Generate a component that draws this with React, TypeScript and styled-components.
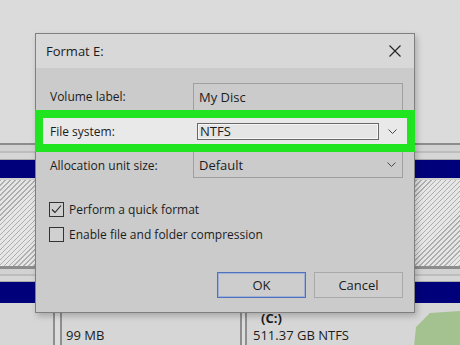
import styled, { createGlobalStyle } from 'styled-components';

const GlobalStyle = createGlobalStyle`
  html, body {
    margin: 0;
    padding: 0;
  }
  body {
    font-family: 'Open Sans', 'Noto Sans', sans-serif;
    color: #1c1c1c;
  }
`;

const Screen = styled.div`
  position: relative;
  width: 460px;
  height: 345px;
  overflow: hidden;
  background: #dadada;
  display: flex;
  flex-direction: column;
`;

const TopArea = styled.div`
  flex: none;
  height: 143px;
  background: #dbdbdb;
`;

const Divider = styled.div<{ $h: number }>`
  flex: none;
  height: ${(p) => p.$h}px;
  box-sizing: border-box;
  border-top: 2px solid #8c8c8c;
  border-bottom: 1px solid #a9a9a9;
  background: linear-gradient(#d2d2d2 0 45%, #bdbdbd 45% 55%, #d6d6d6 55%);
`;

const DiskBar = styled.div<{ $h: number }>`
  flex: none;
  height: ${(p) => p.$h}px;
  background: #00007b;
`;

const Hatch = styled.div`
  flex: none;
  height: 89px;
  box-sizing: border-box;
  border-top: 2px solid #cfcfcf;
  border-bottom: 1px solid #8e8e8e;
  background: repeating-linear-gradient(
    135deg,
    #aeaeae 0 1px,
    #e6e6e6 1px 3.5px
  );
`;

const Lower = styled.div`
  flex: 1;
  min-height: 0;
  display: grid;
  grid-template-columns: 53px 9px 178px 7px 1fr;
  grid-template-rows: 42px;
  background: #d6d6d6;
`;

const Rule = styled.div`
  border-left: 2px solid #8e8e8e;
  border-right: 2px solid #8e8e8e;
  background: #dcdcdc;
`;

const Partition = styled.div<{ $pad: number; $top: number }>`
  padding: ${(p) => p.$top}px 0 0 ${(p) => p.$pad}px;
  font-size: 13px;
  line-height: 17px;
  position: relative;
  white-space: nowrap;
`;

const DriveName = styled.div`
  font-weight: 700;
  padding-left: 8px;
`;

const Hill = styled.svg`
  position: absolute;
  right: 0;
  top: 8px;
`;

const Dialog = styled.div`
  position: absolute;
  left: 35px;
  top: 33px;
  width: 380px;
  height: 280px;
  box-sizing: border-box;
  border: 1px solid #7f7f7f;
  background: #cbcbcb;
  box-shadow: 2px 3px 6px rgba(0, 0, 0, 0.22);
  display: flex;
  flex-direction: column;
  font-size: 12px;
`;

const TitleBar = styled.div`
  height: 34px;
  flex: none;
  background: #d8d8d8;
  display: flex;
  align-items: center;
  justify-content: space-between;
  padding: 0 13px 0 10px;
  font-size: 13px;
`;

const Body = styled.div`
  padding-top: 15px;
  display: flex;
  flex-direction: column;
  flex: 1;
`;

const Row = styled.div<{ $highlight?: boolean; $h: number }>`
  display: grid;
  grid-template-columns: 143px 210px;
  align-items: stretch;
  box-sizing: border-box;
  height: ${(p) => p.$h}px;
  padding-left: ${(p) => (p.$highlight ? 7 : 14)}px;
  ${(p) =>
    p.$highlight &&
    `
    margin: 0 -1px;
    border: 8px solid #1fe41f;
    background: #e9e9e9;
  `}
`;

const Label = styled.div`
  display: flex;
  align-items: center;
`;

const Field = styled.div<{ $edge?: 'top' | 'bottom' }>`
  display: flex;
  align-items: center;
  justify-content: space-between;
  padding: 0 6px 0 5px;
  font-size: 13px;
  border-left: ${(p) => (p.$edge ? '1px solid #a0a0a0' : 'none')};
  border-right: ${(p) => (p.$edge ? '1px solid #a0a0a0' : 'none')};
  border-top: ${(p) => (p.$edge === 'top' ? '1px solid #a0a0a0' : 'none')};
  border-bottom: ${(p) => (p.$edge === 'bottom' ? '1px solid #a0a0a0' : 'none')};
`;

const Combo = styled.div`
  width: 182px;
  height: 17px;
  box-sizing: border-box;
  margin-left: -1px;
  border: 1px solid #686868;
  box-shadow: inset 0 0 0 1px #f6f6f6;
  background: #e5e5e5;
  display: flex;
  align-items: center;
  padding-left: 2px;
`;

const Options = styled.div`
  margin-top: 24px;
  padding-left: 13px;
  display: flex;
  flex-direction: column;
  gap: 10px;
`;

const CheckRow = styled.label`
  display: flex;
  align-items: center;
  gap: 5px;
  height: 15px;
`;

const Box = styled.span`
  width: 15px;
  height: 15px;
  box-sizing: border-box;
  border: 1px solid #333;
  background: #d0d0d0;
  display: flex;
  align-items: center;
  justify-content: center;
`;

const Buttons = styled.div`
  margin-top: auto;
  padding: 0 11px 14px 0;
  display: flex;
  justify-content: flex-end;
  gap: 8px;
`;

const Button = styled.div<{ $default?: boolean }>`
  width: 89px;
  height: 26px;
  box-sizing: border-box;
  border: 1px solid ${(p) => (p.$default ? '#4f72bf' : '#a9a9a9')};
  box-shadow: ${(p) => (p.$default ? 'inset 0 0 0 1px #9fb0d6' : 'none')};
  background: #cdcdcd;
  display: flex;
  align-items: center;
  justify-content: center;
  font-size: 13px;
`;

const Chevron = () => (
  <svg width="9" height="5" viewBox="0 0 9 5">
    <polyline points="0.5,0.5 4.5,4.5 8.5,0.5" fill="none" stroke="#4a4a4a" strokeWidth="1" />
  </svg>
);

export default function App() {
  return (
    <>
      <GlobalStyle />
      <Screen>
        <TopArea />
        <Divider $h={17} />
        <DiskBar $h={18} />
        <Hatch />
        <Divider $h={15} />
        <DiskBar $h={21} />
        <Lower>
          <div />
          <Rule />
          <Partition $pad={4} $top={24}>
            99 MB
          </Partition>
          <Rule />
          <Partition $pad={6} $top={7}>
            <DriveName>(C:)</DriveName>
            <div>511.37 GB NTFS</div>
            <Hill width="46" height="36" viewBox="0 0 46 36">
              <polygon points="2,16 16,2 46,0 46,36 0,36" fill="#a3c28f" />
            </Hill>
          </Partition>
        </Lower>

        <Dialog>
          <TitleBar>
            <span>Format E:</span>
            <svg width="12" height="12" viewBox="0 0 12 12">
              <path d="M0.5 0.5 L11.5 11.5 M11.5 0.5 L0.5 11.5" stroke="#222" strokeWidth="1.1" />
            </svg>
          </TitleBar>
          <Body>
            <Row $h={27}>
              <Label>Volume label:</Label>
              <Field $edge="top">My Disc</Field>
            </Row>
            <Row $h={42} $highlight>
              <Label>File system:</Label>
              <Field>
                <Combo>NTFS</Combo>
                <Chevron />
              </Field>
            </Row>
            <Row $h={26}>
              <Label>Allocation unit size:</Label>
              <Field $edge="bottom">
                Default
                <Chevron />
              </Field>
            </Row>
            <Options>
              <CheckRow>
                <Box>
                  <svg width="13" height="13" viewBox="0 0 13 13">
                    <polyline points="2,6.5 5,9.5 11,2.5" fill="none" stroke="#222" strokeWidth="1.1" />
                  </svg>
                </Box>
                Perform a quick format
              </CheckRow>
              <CheckRow>
                <Box />
                Enable file and folder compression
              </CheckRow>
            </Options>
            <Buttons>
              <Button $default>OK</Button>
              <Button>Cancel</Button>
            </Buttons>
          </Body>
        </Dialog>
      </Screen>
    </>
  );
}
